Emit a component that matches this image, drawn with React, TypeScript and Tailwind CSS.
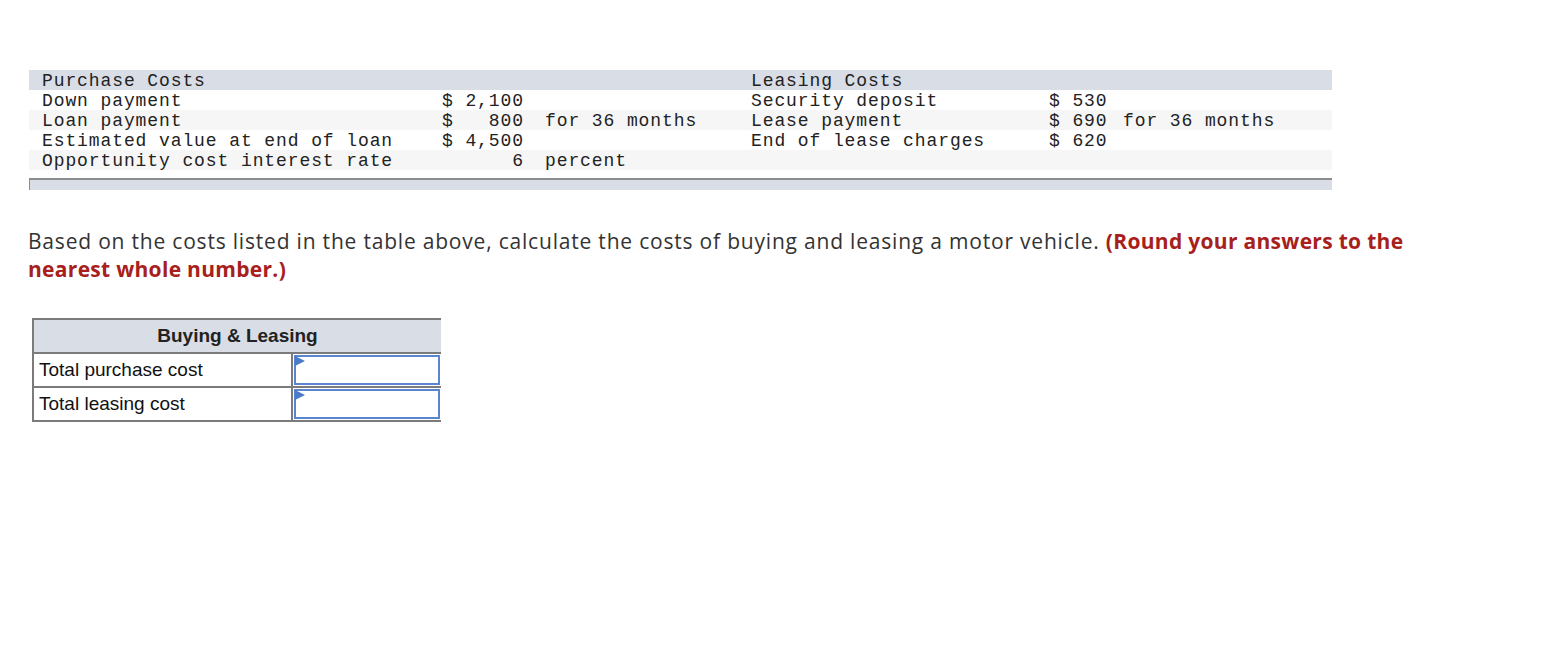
import React from "react";

const mono = "font-['Liberation_Mono',monospace] text-[18px] tracking-[0.9px] leading-[23px] text-[#222] whitespace-pre";

const rows = [
  { bg: "bg-[#d9dde6]", a: "Purchase Costs", b: "", c: "", d: "Leasing Costs", e: "", f: "" },
  { bg: "bg-white", a: "Down payment", b: "$ 2,100", c: "", d: "Security deposit", e: "$ 530", f: "" },
  { bg: "bg-[#f6f6f6]", a: "Loan payment", b: "$   800", c: "for 36 months", d: "Lease payment", e: "$ 690", f: "for 36 months" },
  { bg: "bg-white", a: "Estimated value at end of loan", b: "$ 4,500", c: "", d: "End of lease charges", e: "$ 620", f: "" },
  { bg: "bg-[#f6f6f6]", a: "Opportunity cost interest rate", b: "      6", c: "percent", d: "", e: "", f: "" },
];

function CostTable() {
  return (
    <div className="w-[1303px]">
      {rows.map((r, i) => (
        <div key={i} className={`grid grid-cols-[413px_103px_206px_298px_74px_209px] h-[20px] overflow-hidden ${r.bg} ${mono}`}>
          <div className="pl-[13px]">{r.a}</div>
          <div>{r.b}</div>
          <div>{r.c}</div>
          <div>{r.d}</div>
          <div>{r.e}</div>
          <div>{r.f}</div>
        </div>
      ))}
      <div className="h-[8px] bg-white" />
      <div className="h-[12px] bg-[#d9dde6] border-t-2 border-l border-[#8c8c8c]" />
    </div>
  );
}

function InputCell() {
  return (
    <div className="relative h-full p-px">
      <div className="h-full border-2 border-[#5b86cf] bg-white" />
      <svg className="absolute left-[2px] top-[2px]" width="10" height="10" viewBox="0 0 10 10">
        <polygon points="0,0 10,5 0,10" fill="#4a7bc8" />
      </svg>
    </div>
  );
}

function AnswerTable() {
  const label = "font-['Liberation_Sans',Arial,sans-serif] text-[19px] text-[#111] pl-[5px] flex items-center";
  return (
    <div className="w-[409px] border-2 border-[#7b7b7b] bg-[#7b7b7b] grid grid-cols-[257px_148px] gap-[2px]">
      <div className="col-span-2 h-[32px] bg-[#d9dde6] flex items-center justify-center font-['Liberation_Sans',Arial,sans-serif] text-[19px] font-bold text-[#222]">
        Buying &amp; Leasing
      </div>
      <div className={`h-[32px] bg-white ${label}`}>Total purchase cost</div>
      <div className="h-[32px] bg-white">
        <InputCell />
      </div>
      <div className={`h-[32px] bg-white ${label}`}>Total leasing cost</div>
      <div className="h-[32px] bg-white">
        <InputCell />
      </div>
    </div>
  );
}

export default function App() {
  return (
    <div className="min-h-[670px] w-[1568px] bg-white">
      <div className="pt-[70px] pl-[29px]">
        <CostTable />
      </div>

      {/* Question text */}
      <p className="mt-[37px] ml-[28px] font-['Open_Sans',sans-serif] text-[21px] tracking-[0.8px] leading-[28px] text-[#333]">
        Based on the costs listed in the table above, calculate the costs of buying and leasing a motor vehicle.{" "}
        <b className="text-[#a7201b] tracking-[0.3px]">
          (Round your answers to the
          <br />
          nearest whole number.)
        </b>
      </p>

      <div className="mt-[35px] ml-[32px]">
        <AnswerTable />
      </div>
    </div>
  );
}
